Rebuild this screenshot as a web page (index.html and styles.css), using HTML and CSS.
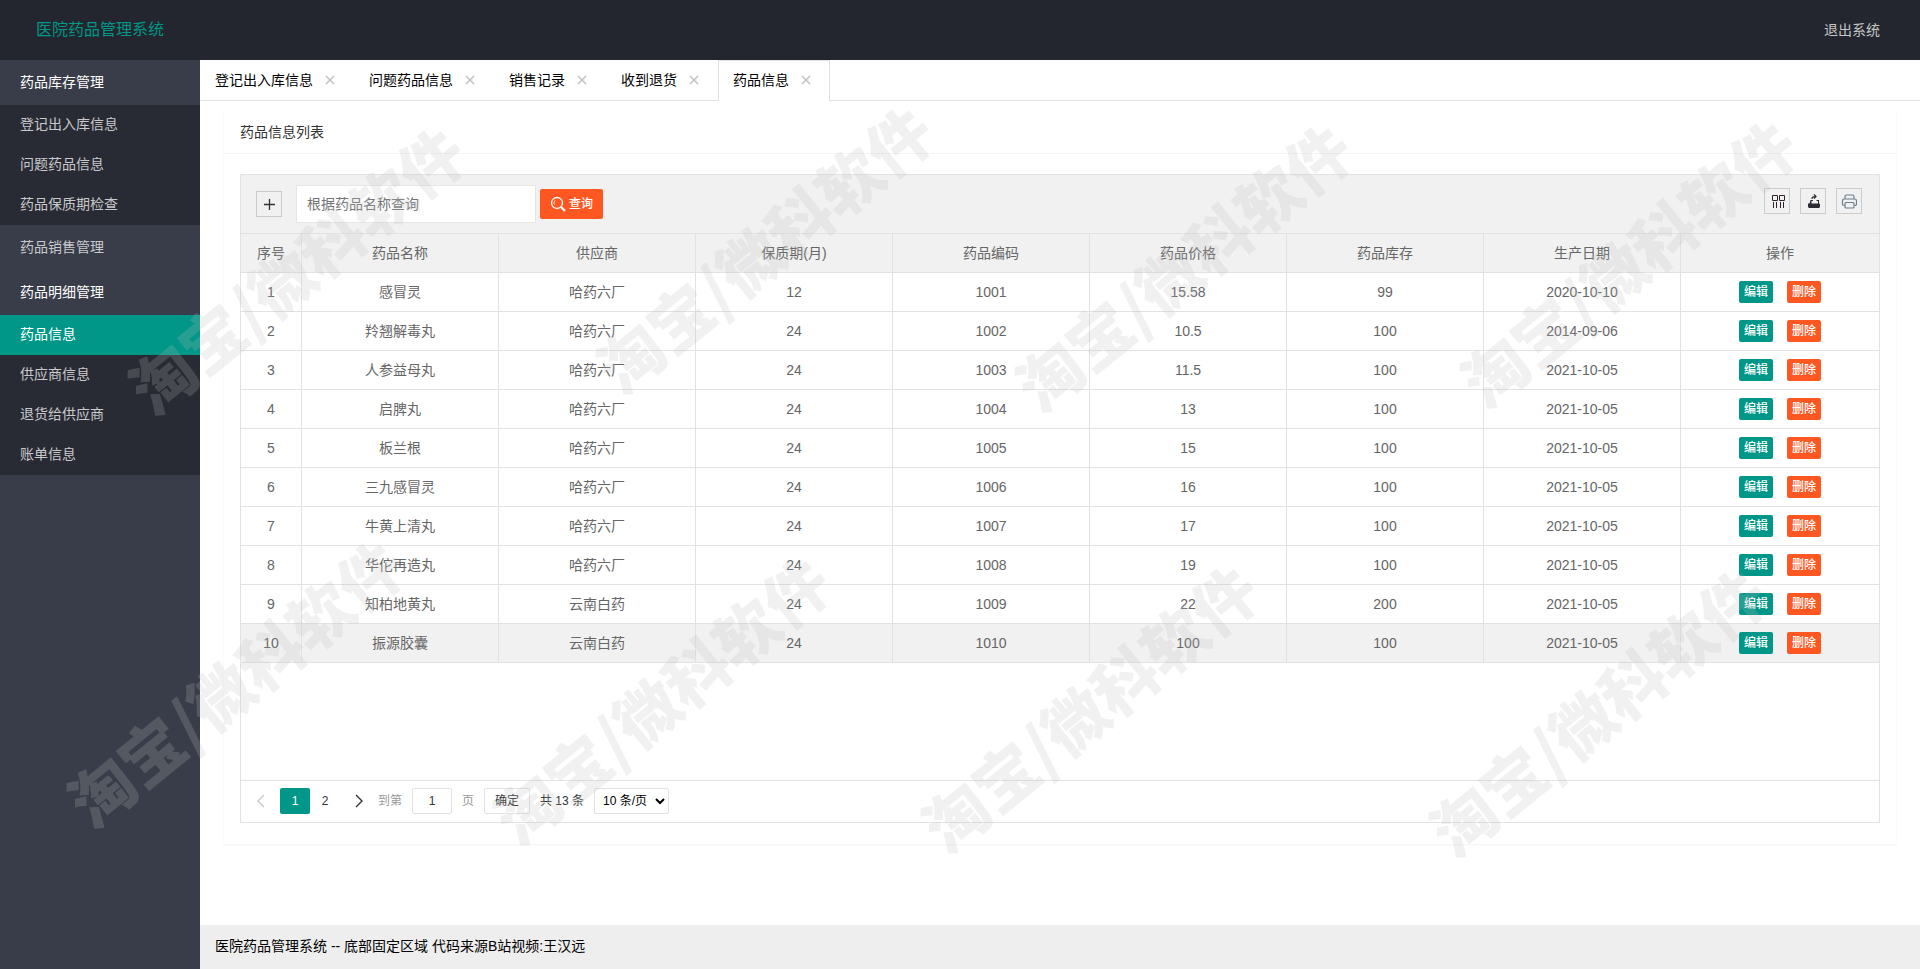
FILE: index.html
```html
<!DOCTYPE html>
<html lang="zh-CN">
<head>
<meta charset="utf-8">
<title>医院药品管理系统</title>
<link rel="stylesheet" href="styles.css">
</head>
<body>
<svg class="sprite" aria-hidden="true">
  <symbol id="i-close" viewBox="0 0 10 10"><path d="M1 1l8 8M9 1L1 9" fill="none" stroke="currentColor" stroke-width="1.5"/></symbol>
</svg>
<div class="app">
  <header class="header">
    <div class="logo">医院药品管理系统</div>
    <a class="logout" href="#">退出系统</a>
  </header>
  <div class="middle">
    <nav class="side">
      <a class="group open" href="#">药品库存管理</a>
      <div class="sub">
        <a href="#">登记出入库信息</a>
        <a href="#">问题药品信息</a>
        <a href="#">药品保质期检查</a>
      </div>
      <a class="group" href="#">药品销售管理</a>
      <a class="group open" href="#">药品明细管理</a>
      <div class="sub">
        <a class="current" href="#">药品信息</a>
        <a href="#">供应商信息</a>
        <a href="#">退货给供应商</a>
        <a href="#">账单信息</a>
      </div>
    </nav>
    <div class="body">
      <div class="tabs">
        <div class="tab"><a href="#">登记出入库信息</a><button class="close" aria-label="关闭"><svg><use href="#i-close"/></svg></button></div>
        <div class="tab"><a href="#">问题药品信息</a><button class="close" aria-label="关闭"><svg><use href="#i-close"/></svg></button></div>
        <div class="tab"><a href="#">销售记录</a><button class="close" aria-label="关闭"><svg><use href="#i-close"/></svg></button></div>
        <div class="tab"><a href="#">收到退货</a><button class="close" aria-label="关闭"><svg><use href="#i-close"/></svg></button></div>
        <div class="tab active"><a href="#">药品信息</a><button class="close" aria-label="关闭"><svg><use href="#i-close"/></svg></button></div>
      </div>
      <main class="content">
        <section class="card">
          <h2 class="card-title">药品信息列表</h2>
          <div class="card-body">
            <div class="grid">
              <div class="toolbar">
                <button class="tool" aria-label="添加"><svg viewBox="0 0 16 16"><path d="M8.500 3v11M3 8.500h11" fill="none" stroke="#333" stroke-width="1.300"/></svg></button>
                <input class="search" type="text" placeholder="根据药品名称查询" aria-label="药品名称">
                <button class="query"><svg viewBox="0 0 16 16"><g fill="none" stroke="#fff"><circle cx="7" cy="7" r="5.500" stroke-width="1.300"/><path d="M4.500 8.500A3 3 0 0 1 5 4.500" stroke-width=".8"/><path d="M11 11l4 4" stroke-width="2.200"/></g></svg>查询</button>
                <div class="tools">
                  <button class="tool" aria-label="筛选列"><svg viewBox="0 0 16 16"><path d="M3.500 2.500h5v5h-5zM10.500 2.500h5v5h-5zM4.500 9v6M7.500 9v6M11.500 9v6M14.500 9v6" fill="none" stroke="#33232f"/></svg></button>
                  <button class="tool" aria-label="导出"><svg viewBox="0 0 16 16"><path d="M3 10.500h1.500L5.500 7H8v1H6.500v2.500H13V8h-1.500V7H14v3.500l1 .5v3l-1 1H4l-1-1z" fill="#2b2b33"/><path d="M7 6c0-2 1-2.500 3.500-2.500M9 1.500L11 3.500 9 5.500" fill="none" stroke="#2b2b33" stroke-width="1.200"/></svg></button>
                  <button class="tool" aria-label="打印"><svg viewBox="0 0 16 16"><g fill="none" stroke="#6b7f90" stroke-width="1.200"><path d="M4 6V3.500Q4 2 5.500 2h6Q13 2 13 3.500V6M3.500 12.500h-.5Q1.500 12.500 1.500 11V8Q1.500 6 3.500 6h10Q15.500 6 15.500 8v3Q15.500 12.500 14 12.500h-.5"/><rect x="4" y="9.500" width="9" height="5.500" rx="1"/></g></svg></button>
                </div>
              </div>
              <table class="table">
                <thead><tr><th class="no">序号</th><th>药品名称</th><th>供应商</th><th>保质期(月)</th><th>药品编码</th><th>药品价格</th><th>药品库存</th><th>生产日期</th><th class="act">操作</th></tr></thead>
                <tbody>
                  <tr><td>1</td><td>感冒灵</td><td>哈药六厂</td><td>12</td><td>1001</td><td>15.58</td><td>99</td><td>2020-10-10</td><td><div class="ops"><button class="edit">编辑</button><button class="del">删除</button></div></td></tr>
                  <tr><td>2</td><td>羚翘解毒丸</td><td>哈药六厂</td><td>24</td><td>1002</td><td>10.5</td><td>100</td><td>2014-09-06</td><td><div class="ops"><button class="edit">编辑</button><button class="del">删除</button></div></td></tr>
                  <tr><td>3</td><td>人参益母丸</td><td>哈药六厂</td><td>24</td><td>1003</td><td>11.5</td><td>100</td><td>2021-10-05</td><td><div class="ops"><button class="edit">编辑</button><button class="del">删除</button></div></td></tr>
                  <tr><td>4</td><td>启脾丸</td><td>哈药六厂</td><td>24</td><td>1004</td><td>13</td><td>100</td><td>2021-10-05</td><td><div class="ops"><button class="edit">编辑</button><button class="del">删除</button></div></td></tr>
                  <tr><td>5</td><td>板兰根</td><td>哈药六厂</td><td>24</td><td>1005</td><td>15</td><td>100</td><td>2021-10-05</td><td><div class="ops"><button class="edit">编辑</button><button class="del">删除</button></div></td></tr>
                  <tr><td>6</td><td>三九感冒灵</td><td>哈药六厂</td><td>24</td><td>1006</td><td>16</td><td>100</td><td>2021-10-05</td><td><div class="ops"><button class="edit">编辑</button><button class="del">删除</button></div></td></tr>
                  <tr><td>7</td><td>牛黄上清丸</td><td>哈药六厂</td><td>24</td><td>1007</td><td>17</td><td>100</td><td>2021-10-05</td><td><div class="ops"><button class="edit">编辑</button><button class="del">删除</button></div></td></tr>
                  <tr><td>8</td><td>华佗再造丸</td><td>哈药六厂</td><td>24</td><td>1008</td><td>19</td><td>100</td><td>2021-10-05</td><td><div class="ops"><button class="edit">编辑</button><button class="del">删除</button></div></td></tr>
                  <tr><td>9</td><td>知柏地黄丸</td><td>云南白药</td><td>24</td><td>1009</td><td>22</td><td>200</td><td>2021-10-05</td><td><div class="ops"><button class="edit">编辑</button><button class="del">删除</button></div></td></tr>
                  <tr class="hover"><td>10</td><td>振源胶囊</td><td>云南白药</td><td>24</td><td>1010</td><td>100</td><td>100</td><td>2021-10-05</td><td><div class="ops"><button class="edit">编辑</button><button class="del">删除</button></div></td></tr>
                </tbody>
              </table>
              <div class="pager">
                <button class="arrow" aria-label="上一页" disabled><svg viewBox="0 0 8 14"><path d="M7 1L1 7l6 6" fill="none" stroke="#c8c8c8" stroke-width="1.400"/></svg></button>
                <a class="page on" href="#">1</a>
                <a class="page" href="#">2</a>
                <button class="arrow next" aria-label="下一页"><svg viewBox="0 0 8 14"><path d="M1 1l6 6-6 6" fill="none" stroke="#333" stroke-width="1.400"/></svg></button>
                <label class="jump">到第<input type="text" value="1">页</label>
                <button class="go">确定</button>
                <span class="total">共 13 条</span>
                <select class="limit" aria-label="每页条数"><option>10 条/页</option><option>20 条/页</option></select>
              </div>
            </div>
          </div>
        </section>
      </main>
      <footer class="footer">医院药品管理系统 -- 底部固定区域 代码来源B站视频:王汉远</footer>
    </div>
  </div>
  <div class="marks" aria-hidden="true">
    <span class="mark m1">淘宝/微科软件</span>
    <span class="mark m2">淘宝/微科软件</span>
    <span class="mark m3">淘宝/微科软件</span>
    <span class="mark m4">淘宝/微科软件</span>
    <span class="mark m5">淘宝/微科软件</span>
    <span class="mark m6">淘宝/微科软件</span>
    <span class="mark m7">淘宝/微科软件</span>
    <span class="mark m8">淘宝/微科软件</span>
  </div>
</div>
</body>
</html>
```
FILE: styles.css
```css
* { box-sizing: border-box; }
body {
  margin: 0;
  font: 14px/24px "Liberation Sans", "Noto Sans CJK SC", sans-serif;
  color: #333;
  background: #fff;
}
a { color: inherit; text-decoration: none; }
button, input, select { font: inherit; color: inherit; margin: 0; }
button { padding: 0; border: 0; background: none; cursor: pointer; }
svg { display: block; }
.sprite { display: none; }

.app { position: relative; display: flex; flex-direction: column; min-height: 100vh; overflow: hidden; }
.header {
  display: flex; align-items: center; justify-content: space-between;
  height: 60px; padding-right: 40px; background: #23262e;
}
.logo { width: 200px; text-align: center; font-size: 16px; color: #009688; }
.logout { color: #c5c6c8; }
.middle { flex: 1; display: flex; }

.side { width: 200px; flex: none; background: #393d49; color: #c8c9cc; }
.side a { display: block; height: 40px; padding: 0 20px; line-height: 39px; }
.side .group { height: 45px; line-height: 44px; }
.side .open { color: #fff; }
.sub { background: #282b33; }
.side .current { background: #009688; color: #fff; }

.body { flex: 1; min-width: 0; display: flex; flex-direction: column; }
.tabs { display: flex; height: 41px; border-bottom: 1px solid #e2e2e2; color: #000; }
.tab { display: flex; align-items: center; gap: 12px; height: 41px; padding: 0 19px 2px 15px; }
.tab.active { border: 1px solid #e2e2e2; border-bottom: 0; padding: 0 18px 2px 14px; background: #fff; }
.close { color: #c2c2c2; }
.close svg { width: 10px; height: 10px; }

.content { flex: 1; padding: 10px 24px 80px; }
.card { box-shadow: 0 1px 2px rgba(0, 0, 0, .05); }
.card-title { margin: 0; padding: 0 16px; font-size: 14px; font-weight: 400; line-height: 42px; border-bottom: 1px solid #f4f4f4; }
.card-body { padding: 20px 16px 21px; }
.grid { border: 1px solid #e2e2e2; color: #666; }
.toolbar {
  display: flex; align-items: center; height: 59px; padding: 0 17px 0 15px;
  background: #f1f1f1; border-bottom: 1px solid #e2e2e2;
}
.tool { display: grid; place-items: center; width: 26px; height: 26px; border: 1px solid #ccc; }
.tool svg { width: 16px; height: 16px; }
.search { width: 240px; height: 38px; margin: 0 4px 0 14px; padding: 0 10px; border: 1px solid #e6e6e6; background: #fff; }
.search::placeholder { color: #757575; }
.query {
  display: flex; align-items: center; gap: 3px; height: 30px; padding: 0 10px;
  border-radius: 2px; background: #ff5722; color: #fff; font-size: 12px; font-weight: 500;
}
.query svg { width: 16px; height: 16px; }
.tools { display: flex; gap: 10px; margin: 0 0 6px auto; }

.table { width: 100%; table-layout: fixed; border-collapse: separate; border-spacing: 0; margin-bottom: 117px; }
.table .no { width: 61px; }
.table .act { width: 198px; }
.table th, .table td {
  height: 39px; padding: 0; text-align: center; font-weight: 400;
  border-right: 1px solid #e2e2e2; border-bottom: 1px solid #e2e2e2;
}
.table th:last-child, .table td:last-child { border-right: 0; }
.table th, .hover { background: #f1f1f1; }
.ops { display: flex; justify-content: center; gap: 14px; }
.ops button { width: 34px; height: 22px; border-radius: 2px; color: #fff; font-size: 12px; font-weight: 500; line-height: 22px; }
.edit { background: #009688; }
.del { background: #ff5722; }

.pager { display: flex; align-items: center; height: 42px; padding: 0 7px 1px; border-top: 1px solid #e2e2e2; font-size: 12px; color: #333; }
.arrow { display: grid; place-items: center; width: 26px; height: 26px; }
.arrow svg { width: 8px; height: 14px; }
.page { width: 30px; height: 26px; line-height: 26px; text-align: center; border-radius: 2px; }
.page.on { margin-left: 6px; background: #009688; color: #fff; }
.next { margin: 0 6px; }
.jump { display: flex; align-items: center; gap: 10px; color: #999; }
.jump input { width: 40px; height: 26px; padding: 0; text-align: center; color: #333; border: 1px solid #e2e2e2; border-radius: 2px; background: #fff; }
.go { width: 46px; height: 26px; margin: 0 10px; border: 1px solid #e2e2e2; border-radius: 2px; }
.limit { width: 75px; height: 26px; margin-left: 10px; padding: 0 0 0 4px; border: 1px solid #e2e2e2; border-radius: 2px; background: #fff; color: #000; }

.footer { height: 44px; padding: 0 15px; line-height: 43px; background: #eee; color: #000; }

.marks { position: absolute; inset: 0; pointer-events: none; overflow: hidden; }
.mark {
  position: absolute; transform: translate(-50%, -50%) rotate(-39deg);
  font: 900 64px/64px "Noto Sans CJK SC", sans-serif; white-space: nowrap;
  color: rgba(188, 188, 188, .21);
}
.m1 { left: 295px; top: 268px; }
.m2 { left: 763px; top: 247px; }
.m3 { left: 1182px; top: 265px; }
.m4 { left: 1627px; top: 261px; }
.m5 { left: 234px; top: 681px; }
.m6 { left: 660px; top: 698px; }
.m7 { left: 1088px; top: 706px; }
.m8 { left: 1596px; top: 710px; }
```
